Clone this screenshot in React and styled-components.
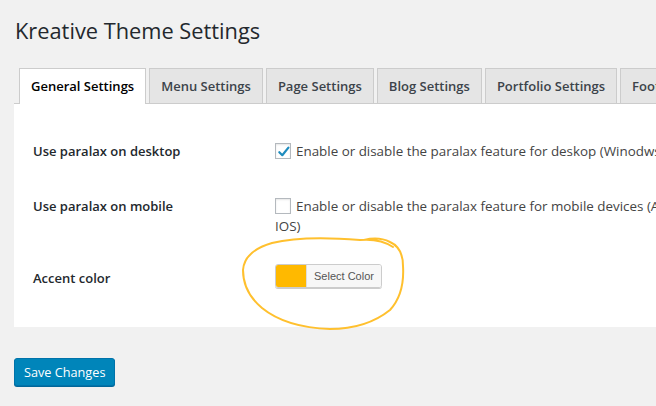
import React from "react";
import styled, { createGlobalStyle } from "styled-components";

const Global = createGlobalStyle`
  html, body {
    margin: 0;
    padding: 0;
    background: #f1f1f1;
    overflow: hidden;
  }
  body {
    font-family: "Open Sans", "Noto Sans", sans-serif;
    color: #23282d;
  }
`;

const Page = styled.div`
  position: relative;
  width: 656px;
  height: 406px;
  overflow: hidden;
  padding-left: 14px;
  box-sizing: border-box;
`;

const Title = styled.h1`
  margin: 0;
  padding: 17px 0 0 1px;
  font-size: 21.8px;
  font-weight: 400;
  line-height: 28px;
  color: #23282d;
  white-space: nowrap;
`;

const TabBar = styled.div`
  display: flex;
  gap: 3px;
  margin-top: 23px;
  padding-left: 5px;
  width: 900px;
  border-bottom: 1px solid #ccc;
`;

const Tab = styled.div`
  padding: 0 11px;
  display: flex;
  align-items: center;
  box-sizing: border-box;
  border: 1px solid #ccc;
  border-bottom: none;
  background: ${(p) => (p.$active ? "#fff" : "#e5e5e5")};
  margin-bottom: ${(p) => (p.$active ? "-1px" : "0")};
  height: ${(p) => (p.$active ? "36px" : "35px")};
  padding-bottom: ${(p) => (p.$active ? "1px" : "0")};
  font-size: 13px;
  font-weight: 600;
  color: ${(p) => (p.$active ? "#000" : "#3c434a")};
  white-space: nowrap;
`;

const Panel = styled.div`
  width: 900px;
  background: #fff;
  padding: 37px 0 35px 19px;
  box-sizing: border-box;
`;

const Row = styled.div`
  display: grid;
  grid-template-columns: 242px 1fr;
  margin-top: ${(p) => p.$top || 0}px;
  align-items: start;
`;

const Label = styled.div`
  font-size: 13px;
  font-weight: 600;
  line-height: 20px;
  color: #23282d;
  padding-top: ${(p) => p.$pad || 0}px;
`;

const Field = styled.div`
  font-size: 13.4px;
  line-height: 20px;
  color: #444;
  width: 440px;
  white-space: ${(p) => (p.$nowrap ? "nowrap" : "normal")};
`;

const Box = styled.span`
  display: inline-block;
  width: 16px;
  height: 16px;
  box-sizing: border-box;
  border: 1px solid #b4b9be;
  background: #fff;
  box-shadow: inset 0 1px 2px rgba(0, 0, 0, 0.1);
  vertical-align: -3px;
  margin-right: 5px;
  position: relative;

  svg {
    position: absolute;
    left: 0;
    top: 0;
  }
`;

const ColorButton = styled.div`
  display: inline-flex;
  height: 24px;
  box-sizing: border-box;
  border: 1px solid #ccc;
  border-radius: 3px;
  overflow: hidden;
  box-shadow: 0 1px 0 #ccc;
`;

const Swatch = styled.span`
  width: 30px;
  background: ${(p) => p.$color};
`;

const SwatchText = styled.span`
  display: flex;
  align-items: center;
  padding: 0 7px;
  background: #f7f7f7;
  border-left: 1px solid #ddd;
  font-family: "Liberation Sans", Arial, sans-serif;
  font-size: 11px;
  color: #555;
`;

const SaveButton = styled.button`
  margin-top: 31px;
  height: 28px;
  padding: 0 9px;
  background: #0085ba;
  border: 1px solid #0073aa;
  border-radius: 3px;
  box-shadow: 0 1px 0 #006799;
  color: #fff;
  font-family: "Open Sans", "Noto Sans", sans-serif;
  font-size: 12.7px;
  cursor: pointer;
`;

const Scribble = styled.svg`
  position: absolute;
  left: 0;
  top: 0;
  pointer-events: none;
`;

const Check = () => (
  <svg width="16" height="16" viewBox="0 0 16 16">
    <path
      d="M3.3 8.2 L6.3 11.2 L12.4 3.6"
      fill="none"
      stroke="#1e8cbe"
      strokeWidth="2.2"
      strokeLinecap="round"
      strokeLinejoin="round"
    />
  </svg>
);

const tabs = [
  "General Settings",
  "Menu Settings",
  "Page Settings",
  "Blog Settings",
  "Portfolio Settings",
  "Footer Settings",
];

export default function App() {
  return (
    <>
      <Global />
      <Page>
        <Title>Kreative Theme Settings</Title>
        <TabBar>
          {tabs.map((t, i) => (
            <Tab key={t} $active={i === 0}>
              {t}
            </Tab>
          ))}
        </TabBar>
        <Panel>
          <Row>
            <Label>Use paralax on desktop</Label>
            <Field $nowrap>
              <Box>
                <Check />
              </Box>
              Enable or disable the paralax feature for deskop (Winodws, Mac)
            </Field>
          </Row>
          <Row $top={35}>
            <Label>Use paralax on mobile</Label>
            <Field>
              <Box />
              Enable or disable the paralax feature for mobile devices (Android,
              IOS)
            </Field>
          </Row>
          <Row $top={28}>
            <Label $pad={4}>Accent color</Label>
            <div>
              <ColorButton>
                <Swatch $color="#ffb900" />
                <SwatchText>Select Color</SwatchText>
              </ColorButton>
            </div>
          </Row>
        </Panel>
        <SaveButton>Save Changes</SaveButton>
        <Scribble width="656" height="406" viewBox="0 0 656 406">
          <path
            d="M393 247 C 384 241, 372 239, 360 240 C 335 238, 300 236, 272 243 C 255 248, 244 256, 243 270 C 243 285, 250 298, 262 308 C 278 321, 300 328, 330 329 C 355 329, 375 322, 390 310 C 401 298, 404 282, 403 266 C 403 255, 399 246, 390 242 C 382 238, 372 238, 364 240"
            fill="none"
            stroke="#ffc02e"
            strokeWidth="2"
            strokeLinecap="round"
          />
        </Scribble>
      </Page>
    </>
  );
}
